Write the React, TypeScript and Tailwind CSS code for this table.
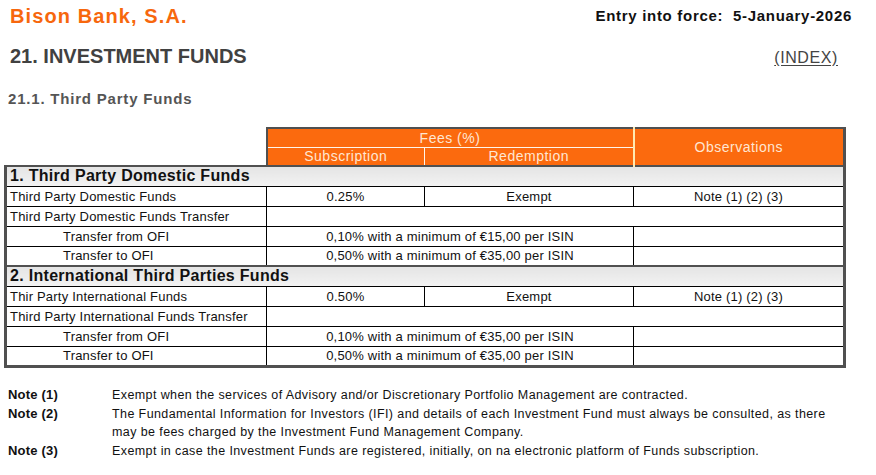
import React from 'react';

const ORANGE = 'bg-[#fb6a0e]';

type Row =
  | { kind: 'fund'; label: string; sub: string; red: string; obs: string }
  | { kind: 'group'; label: string }
  | { kind: 'transfer'; label: string; text: string };

interface Section {
  title: string;
  rows: Row[];
}

const sections: Section[] = [
  {
    title: '1. Third Party Domestic Funds',
    rows: [
      { kind: 'fund', label: 'Third Party Domestic Funds', sub: '0.25%', red: 'Exempt', obs: 'Note (1) (2) (3)' },
      { kind: 'group', label: 'Third Party Domestic Funds Transfer' },
      { kind: 'transfer', label: 'Transfer from OFI', text: '0,10% with a minimum of €15,00 per ISIN' },
      { kind: 'transfer', label: 'Transfer to OFI', text: '0,50% with a minimum of €35,00 per ISIN' },
    ],
  },
  {
    title: '2. International Third Parties Funds',
    rows: [
      { kind: 'fund', label: 'Thir Party International Funds', sub: '0.50%', red: 'Exempt', obs: 'Note (1) (2) (3)' },
      { kind: 'group', label: 'Third Party International Funds Transfer' },
      { kind: 'transfer', label: 'Transfer from OFI', text: '0,10% with a minimum of €35,00 per ISIN' },
      { kind: 'transfer', label: 'Transfer to OFI', text: '0,50% with a minimum of €35,00 per ISIN' },
    ],
  },
];

const notes = [
  { id: 'Note (1)', text: 'Exempt when the services of Advisory and/or Discretionary Portfolio Management are contracted.' },
  {
    id: 'Note (2)',
    text: 'The Fundamental Information for Investors (IFI) and details of each Investment Fund must always be consulted, as there may be fees charged by the Investment Fund Management Company.',
  },
  { id: 'Note (3)', text: 'Exempt in case the Investment Funds are registered, initially, on na electronic platform of Funds subscription.' },
];

const cell = 'h-[20px] p-0 border border-black text-[13px] tracking-[0.2px] leading-none text-[#111] align-middle';
const edgeL = 'border-l-[3px] border-l-[#505050]';
const edgeR = 'border-r-[3px] border-r-[#505050]';
const headText = 'text-center text-[14px] tracking-[0.5px] leading-none text-[#ffe6d2]';

function DataRow({ row, last }: { row: Row; last: boolean }) {
  const bottom = last ? 'border-b-[3px] border-b-[#505050]' : '';
  if (row.kind === 'fund') {
    return (
      <tr>
        <td className={`${cell} ${edgeL} ${bottom} pl-[3px] text-left`}>{row.label}</td>
        <td className={`${cell} ${bottom} text-center`}>{row.sub}</td>
        <td className={`${cell} ${bottom} text-center`}>{row.red}</td>
        <td className={`${cell} ${edgeR} ${bottom} text-center`}>{row.obs}</td>
      </tr>
    );
  }
  if (row.kind === 'group') {
    return (
      <tr>
        <td className={`${cell} ${edgeL} ${bottom} pl-[3px] text-left`}>{row.label}</td>
        <td colSpan={3} className={`${cell} ${edgeR} ${bottom}`}></td>
      </tr>
    );
  }
  return (
    <tr>
      <td className={`${cell} ${edgeL} ${bottom} pl-[56px] text-left`}>{row.label}</td>
      <td colSpan={2} className={`${cell} ${bottom} text-center`}>{row.text}</td>
      <td className={`${cell} ${edgeR} ${bottom}`}></td>
    </tr>
  );
}

export default function App() {
  return (
    <div className="w-[876px] h-[475px] bg-white overflow-hidden font-['Liberation_Sans',Arial,sans-serif]">
      <div className="flex h-[32px] items-center justify-between pl-[10px] pr-[24px]">
        <span className="text-[20px] font-bold text-[#f7670d] tracking-[1.1px]">Bison Bank, S.A.</span>
        <span className="text-[15px] font-bold text-[#111] tracking-[0.7px]">
          Entry into force:&nbsp; 5-January-2026
        </span>
      </div>

      <div className="mt-[12px] flex h-[24px] items-center justify-between pl-[10px] pr-[38px]">
        <span className="text-[20px] font-bold text-[#414141]">21. INVESTMENT FUNDS</span>
        <span className="pt-[4px] text-[16px] tracking-[0.6px] text-[#444] underline underline-offset-2">(INDEX)</span>
      </div>

      <div className="mt-[20px] flex h-[22px] items-center pl-[8px]">
        <span className="text-[15px] font-bold text-[#555] tracking-[0.8px]">21.1. Third Party Funds</span>
      </div>

      <table className="mt-[17px] ml-[4px] w-[839px] table-fixed border-collapse">
        <colgroup>
          <col className="w-[261px]" />
          <col className="w-[158px]" />
          <col className="w-[209px]" />
          <col className="w-[211px]" />
        </colgroup>
        <thead>
          <tr>
            <td className="p-0 border-0"></td>
            <td
              colSpan={2}
              className={`${ORANGE} h-[19px] p-0 border-t-2 border-t-[#505050] border-l-2 border-l-[#505050] border-b border-b-[#fff5ea] border-r-2 border-r-[#ffe9b0] ${headText}`}
            >
              Fees (%)
            </td>
            <td rowSpan={2} className={`${ORANGE} p-0 border-t-2 border-t-[#505050] ${edgeR} ${headText}`}>
              Observations
            </td>
          </tr>
          <tr>
            <td className="p-0 border-0"></td>
            <td className={`${ORANGE} h-[19px] p-0 border-l-2 border-l-[#505050] border-r border-r-[#fff5ea] ${headText}`}>
              Subscription
            </td>
            <td className={`${ORANGE} p-0 border-r-2 border-r-[#ffe9b0] ${headText}`}>Redemption</td>
          </tr>
        </thead>
        <tbody>
          {sections.map((s, si) => (
            <React.Fragment key={s.title}>
              <tr>
                <td
                  colSpan={4}
                  className={`h-[20px] p-0 pl-[3px] border-t-2 border-t-[#505050] border-b border-b-black ${edgeL} ${edgeR} bg-gradient-to-b from-[#e4e4e4] to-[#f2f2f2] text-left text-[16px] tracking-[0.3px] font-bold leading-none text-[#111]`}
                >
                  {s.title}
                </td>
              </tr>
              {s.rows.map((r, ri) => (
                <DataRow key={ri} row={r} last={si === sections.length - 1 && ri === s.rows.length - 1} />
              ))}
            </React.Fragment>
          ))}
        </tbody>
      </table>

      <div className="mt-[18px] flex flex-col gap-[1px] pl-[8px] pr-[26px] text-[12.5px] leading-[18px] text-[#111]">
        {notes.map((n) => (
          <div key={n.id} className="flex items-baseline">
            <span className="w-[104px] shrink-0 text-[13px] font-bold tracking-[0.2px]">{n.id}</span>
            <span className="tracking-[0.4px]">{n.text}</span>
          </div>
        ))}
      </div>
    </div>
  );
}
